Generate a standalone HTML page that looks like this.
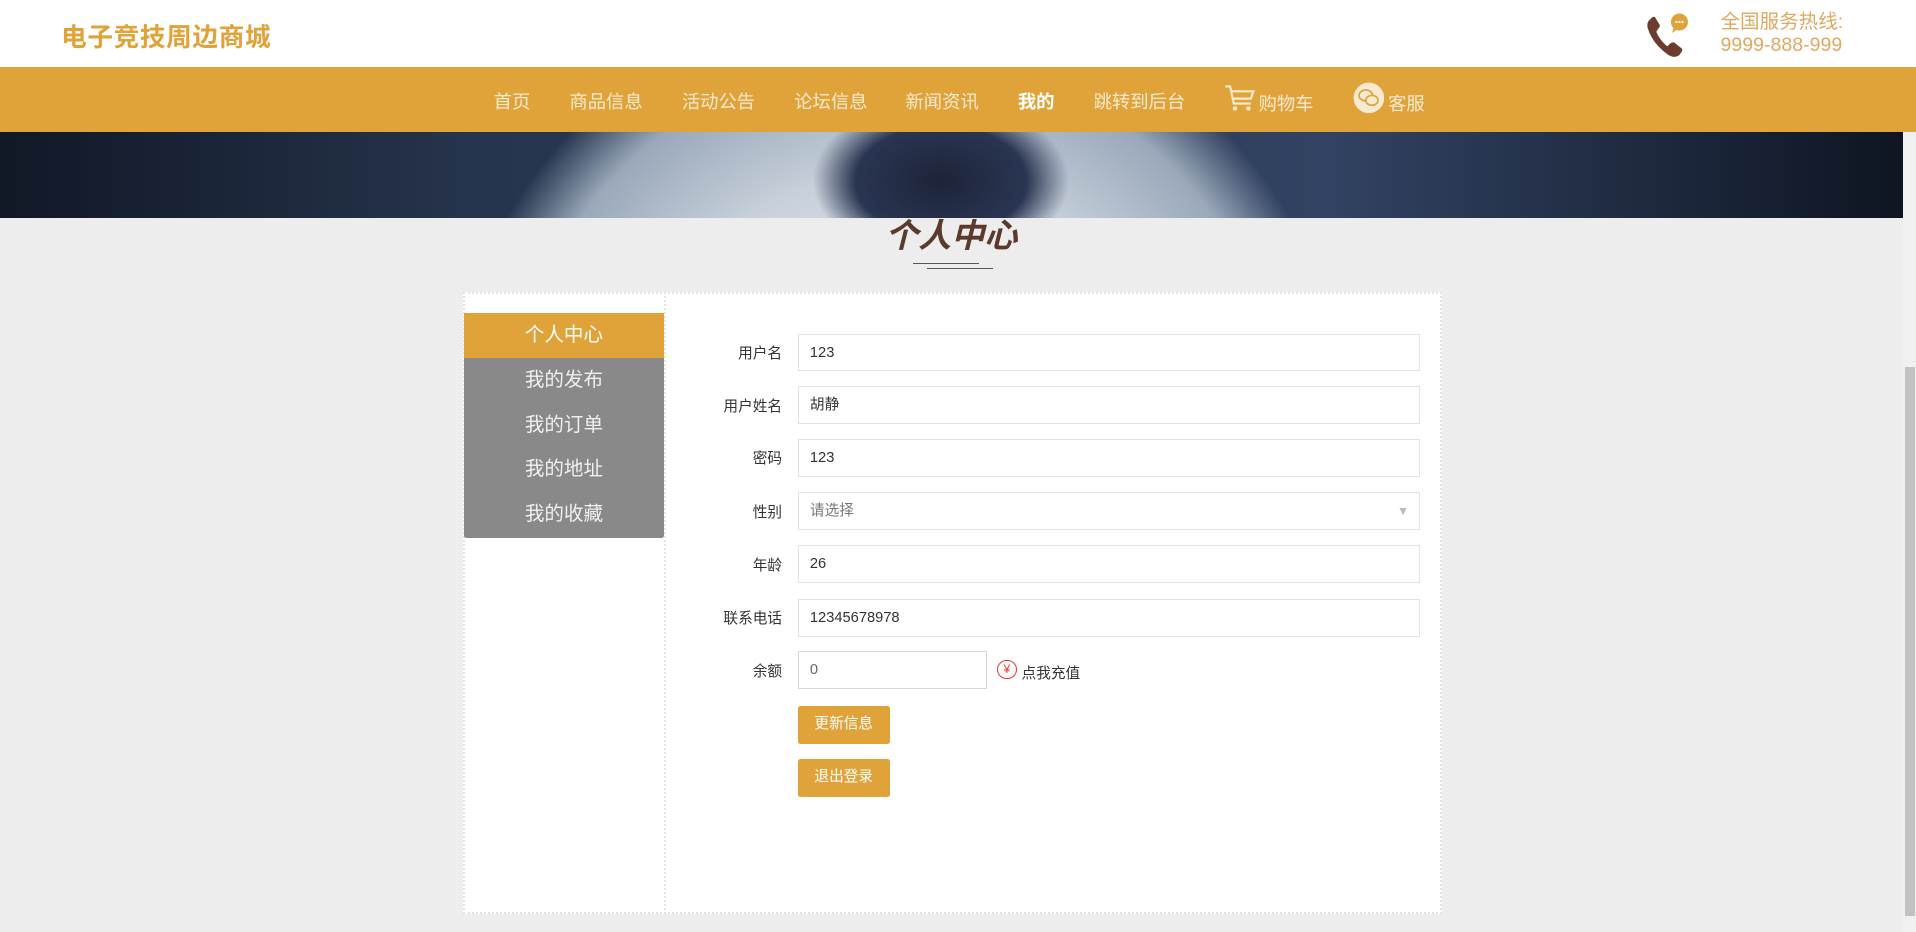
<!DOCTYPE html>
<html><head><meta charset="utf-8"><style>
html{zoom:1.22194}
*{margin:0;padding:0;box-sizing:border-box}
body{width:1568px;height:763px;overflow:hidden;background:#ededed;font-family:"Liberation Sans","Noto Sans CJK SC",sans-serif;position:relative}
.abs{position:absolute}
.hdr{left:0;top:0;width:1568px;height:55px;background:#fff}
.logo{left:50px;top:14px;font-size:21px;font-weight:bold;color:#dfa33a;letter-spacing:0.5px}
.hot{left:1408px;top:9px;font-size:16px;color:#e0a860;line-height:19px}
.nav{left:0;top:55px;width:1568px;height:53px;background:#dfa33a}
.nav span{position:absolute;top:17px;font-size:15px;color:#f7ead2;white-space:nowrap}
.banner{left:0;top:108px;width:1557px;height:70px;background:
radial-gradient(ellipse 140px 90px at 770px 40px,#1c2438 0%,#2a3552 50%,transparent 75%),
radial-gradient(ellipse 360px 330px at 735px 220px,#e6ebf1 0%,#c9d2dc 55%,#9aa8ba 85%,transparent 100%),
linear-gradient(90deg,#111826,#26344d 25%,#324262 70%,#0e1522)}
.sb{left:1557px;top:108px;width:11px;height:655px;background:#f0f0f0}
.thumb{left:1559px;top:300px;width:8px;height:450px;background:#c1c1c1}
.title{left:0;width:1557px;top:171px;text-align:center;font-size:27px;font-weight:bold;font-style:italic;color:#5b3a2c}
.card{left:379px;top:239px;width:801px;height:509px;background:#fff;border:2px dotted #e2e2e2}
.side{left:543px;top:239px;width:2px;height:509px;border-left:2px dotted #e2e2e2}
.mi{position:absolute;left:380px;width:163px;height:37px;background:#898989;color:#f0f0f0;font-size:16px;text-align:center;line-height:37px}
.lbl{position:absolute;right:928px;font-size:12px;color:#333;text-align:right;white-space:nowrap}
.inp{position:absolute;left:653px;width:509px;height:31px;border:1px solid #e2e2e2;font-size:12px;color:#333;padding-left:9px;line-height:30px}
.btn{position:absolute;left:653px;width:75px;height:31px;background:#dfa33a;color:#fff;font-size:12px;text-align:center;line-height:31px;border-radius:2px}
</style></head><body>
<div class="abs hdr"></div>
<div class="abs logo">电子竞技周边商城</div>
<svg class="abs" style="left:1345px;top:9px" width="40" height="40" viewBox="0 0 40 40">
<path d="M5 7 Q2 9 3 14 Q7 27 20 36 Q25 39 29 36 L31 33 Q32 31 30 30 L25 26 Q23 25 21 27 L19 29 Q13 24 10 17 L12 14 Q14 12 12 10 L9 5 Q7 4 5 7Z" fill="#6b3d2e"/>
<circle cx="29" cy="9" r="7" fill="#e0a33b"/><path d="M24 14 L23 18 L27 15Z" fill="#e0a33b"/>
<circle cx="26.5" cy="9" r="0.9" fill="#fff"/><circle cx="29" cy="9" r="0.9" fill="#fff"/><circle cx="31.5" cy="9" r="0.9" fill="#fff"/>
</svg>
<div class="abs hot">全国服务热线:<br>9999-888-999</div>
<div class="abs nav">
<span style="left:404px">首页</span>
<span style="left:466px">商品信息</span>
<span style="left:558px">活动公告</span>
<span style="left:650px">论坛信息</span>
<span style="left:741px">新闻资讯</span>
<span style="left:833px;font-weight:bold;color:#fff">我的</span>
<span style="left:895px">跳转到后台</span>
<svg style="position:absolute;left:1002px;top:14px" width="26" height="24" viewBox="0 0 26 24"><path d="M1 2 L5 2 L8 16 L22 16 M6 6 L24 6 L22 12 L8 12" fill="none" stroke="#f7ead2" stroke-width="1.8"/><circle cx="9" cy="20" r="1.8" fill="#f7ead2"/><circle cx="20" cy="20" r="1.8" fill="#f7ead2"/></svg>
<span style="left:1030px;top:19px">购物车</span>
<svg style="position:absolute;left:1107px;top:12px" width="26" height="26" viewBox="0 0 26 26"><circle cx="13" cy="13" r="12.5" fill="#f7ead2"/><ellipse cx="10.5" cy="11" rx="5.5" ry="4.5" fill="none" stroke="#dfa33a" stroke-width="1.4"/><ellipse cx="15.5" cy="15" rx="5" ry="4" fill="#f7ead2" stroke="#dfa33a" stroke-width="1.4"/></svg>
<span style="left:1136px;top:19px">客服</span>
</div>
<div class="abs banner"></div>
<div class="abs sb"></div><div class="abs thumb"></div>
<div class="abs title">个人中心</div>
<div class="abs" style="left:747px;top:215px;width:54px;height:1px;background:#555"></div>
<div class="abs" style="left:759px;top:219px;width:54px;height:1px;background:#555"></div>
<div class="abs card"></div>
<div class="abs side"></div>
<div class="mi" style="top:256px;background:#dfa33a;color:#fff">个人中心</div>
<div class="mi" style="top:293px">我的发布</div>
<div class="mi" style="top:330px">我的订单</div>
<div class="mi" style="top:366px">我的地址</div>
<div class="mi" style="top:403px;border-radius:0 0 2px 2px">我的收藏</div>

<div class="lbl" style="top:280px">用户名</div><div class="inp" style="top:273px">123</div>
<div class="lbl" style="top:323px">用户姓名</div><div class="inp" style="top:316px">胡静</div>
<div class="lbl" style="top:366px">密码</div><div class="inp" style="top:359px">123</div>
<div class="lbl" style="top:410px">性别</div><div class="inp" style="top:403px;color:#777">请选择<span style="position:absolute;right:8px;top:0;font-size:10px;color:#bbb">▼</span></div>
<div class="lbl" style="top:453px">年龄</div><div class="inp" style="top:446px">26</div>
<div class="lbl" style="top:497px">联系电话</div><div class="inp" style="top:490px">12345678978</div>
<div class="lbl" style="top:540px">余额</div><div class="inp" style="top:533px;width:155px;border-color:#d6d6d6;color:#666">0</div>
<div class="abs" style="left:816px;top:540px;width:16px;height:16px;border:1px solid #e33;border-radius:50%;color:#e33;font-size:10px;text-align:center;line-height:14px">¥</div>
<div class="abs" style="left:836px;top:542px;font-size:12px;color:#333">点我充值</div>
<div class="btn" style="top:578px">更新信息</div>
<div class="btn" style="top:621px">退出登录</div>
</body></html>
